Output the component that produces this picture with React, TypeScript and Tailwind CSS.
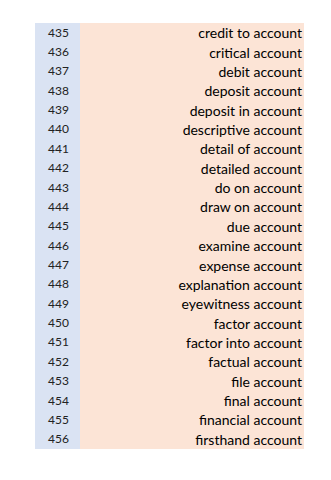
const rows: [number, string][] = [
  [435, "credit to account"],
  [436, "critical account"],
  [437, "debit account"],
  [438, "deposit account"],
  [439, "deposit in account"],
  [440, "descriptive account"],
  [441, "detail of account"],
  [442, "detailed account"],
  [443, "do on account"],
  [444, "draw on account"],
  [445, "due account"],
  [446, "examine account"],
  [447, "expense account"],
  [448, "explanation account"],
  [449, "eyewitness account"],
  [450, "factor account"],
  [451, "factor into account"],
  [452, "factual account"],
  [453, "file account"],
  [454, "final account"],
  [455, "financial account"],
  [456, "firsthand account"],
];

export default function App() {
  return (
    <div className="w-[331px] h-[480px] bg-white pt-[23px] pl-[35px] font-['Lato',sans-serif]">
      <div className="w-[269px] flex flex-col">
        {rows.map(([n, t]) => (
          <div key={n} className="flex h-[19.36px]">
            <div className="w-[45px] bg-[#dae3f3] flex items-center justify-center pl-[2px] text-[12px] text-[#222]">
              {n}
            </div>
            <div className="flex-1 bg-[#fce4d6] flex items-center justify-end pr-[2px] text-[14px] text-black">
              {t}
            </div>
          </div>
        ))}
      </div>
    </div>
  );
}
